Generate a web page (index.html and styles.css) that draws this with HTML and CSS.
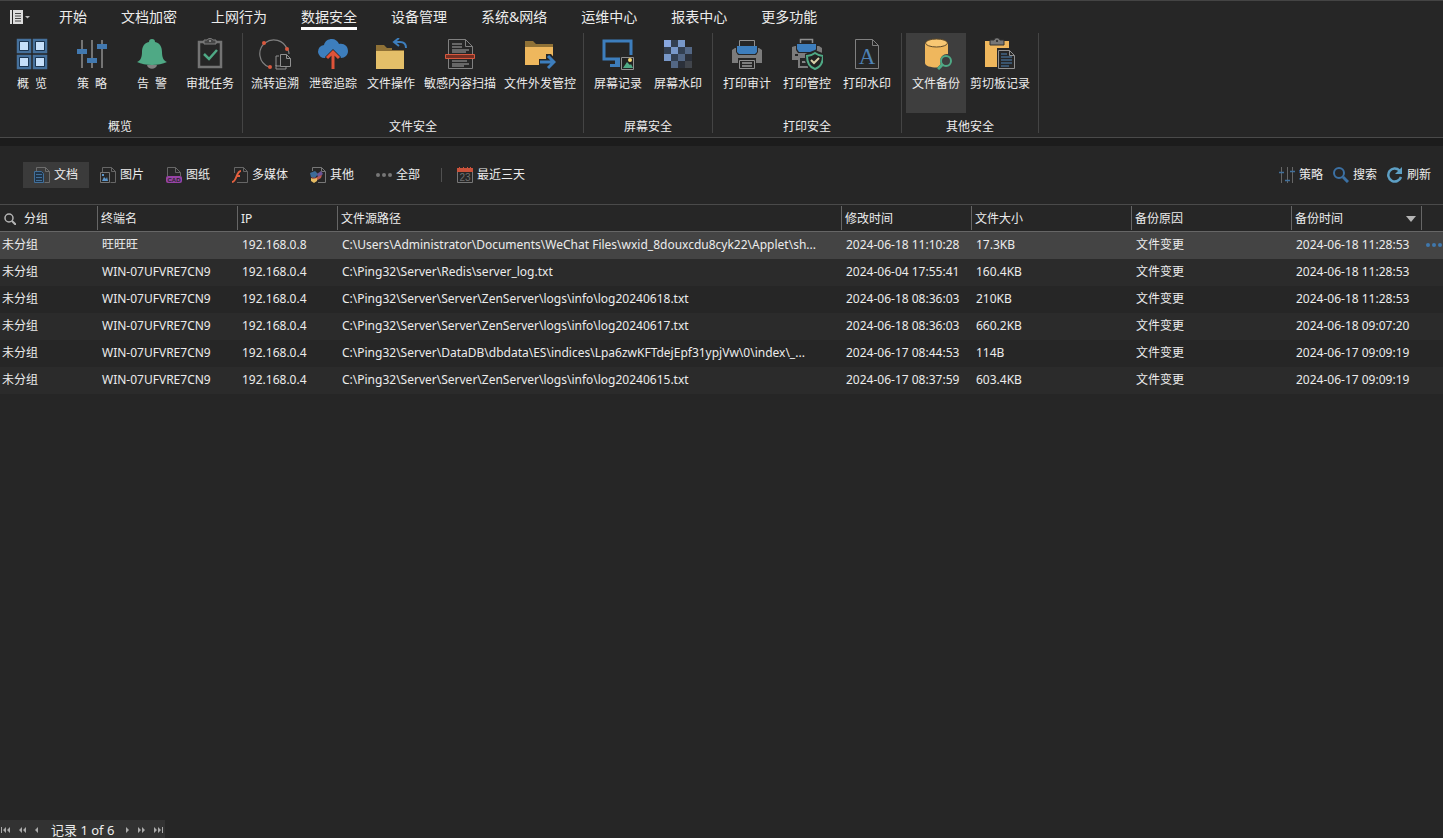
FILE: index.html
```html
<!DOCTYPE html>
<html lang="zh-CN">
<head>
    <meta charset="UTF-8">
    <meta name="viewport" content="width=device-width, initial-scale=1.0">
    <title>文件备份</title>
    <link rel="stylesheet" href="styles.css">
</head>
<body>

<nav class="menu">
    <button class="app-btn" type="button" aria-label="菜单">
        <svg width="20" height="14" viewBox="0 0 20 14">
            <path d="M0 0h2v14H0z" fill="#ddd"/>
            <path d="M3 0h10v14H3z" fill="#ddd"/>
            <path d="M5 3.5h6M5 6h6M5 8.5h6M5 11h6" stroke="#444"/>
            <path d="M15 6h5l-2.5 2.5z" fill="#bbb"/>
        </svg>
    </button>
    <a href="#">开始</a>
    <a href="#">文档加密</a>
    <a href="#">上网行为</a>
    <a href="#" class="active">数据安全</a>
    <a href="#">设备管理</a>
    <a href="#">系统&amp;网络</a>
    <a href="#">运维中心</a>
    <a href="#">报表中心</a>
    <a href="#">更多功能</a>
</nav>

<div class="ribbon">
    <section class="group first">
        <div class="group-items">
            <button type="button">
                <svg viewBox="0 0 32 32">
                    <path d="M2 2h12v12H2zM18 2h12v12H18zM2 18h12v12H2zM18 18h12v12H18z" fill="#0f2338" stroke="#46719c" stroke-width="2.5"/>
                    <path d="M4 4h8v8H4zM20 4h8v8h-8zM4 20h8v8H4zM20 20h8v8h-8z" fill="#c6e0fa"/>
                </svg>
                <span>概  览</span>
            </button>
            <button type="button">
                <svg viewBox="0 0 32 32">
                    <path d="M6 2v28M16 2v28M26 2v28" stroke="#747474" stroke-width="2"/>
                    <path d="M1 11h10v5H1zM11 20h10v5H11zM21 6h10v5H21z" fill="#4279b0"/>
                </svg>
                <span>策  略</span>
            </button>
            <button type="button">
                <svg viewBox="0 0 32 32">
                    <path d="M11 27h10c-1 5-9 5-10 0z" fill="#808080"/>
                    <path d="M16 1c2 0 3 1 3 3 5 1 7 5 7 10 0 6 2 9 5 10-8 4-22 4-30 0 3-1 5-4 5-10 0-5 2-9 7-10 0-2 1-3 3-3z" fill="#4fa985"/>
                </svg>
                <span>告  警</span>
            </button>
            <button type="button">
                <svg viewBox="0 0 32 32">
                    <path d="M5 4h22v25H5z" fill="none" stroke="#747474" stroke-width="2.5"/>
                    <path d="M10 2h3c1-2 5-2 6 0h3v4H10z" fill="#444" stroke="#808080"/>
                    <circle cx="16" cy="3" r="1" fill="#999"/>
                    <path d="M10 16l5 5 8-9" fill="none" stroke="#4fa985" stroke-width="2.5"/>
                </svg>
                <span>审批任务</span>
            </button>
        </div>
        <h2>概览</h2>
    </section>

    <section class="group files">
        <div class="group-items">
            <button type="button">
                <svg viewBox="0 0 32 32">
                    <path d="M6 5A14 14 0 0 0 10 29M6 5A14 14 0 0 1 28 11M29 12q1 2 1 4" fill="none" stroke="#808080" stroke-width="1.2"/>
                    <path d="M22 28h-5V18h3" fill="none" stroke="#909090"/>
                    <path d="M21.500 16.500h6l4 4v8h-10zM27.500 16.500v4h4M17 27v4h10v-2" fill="none" stroke="#909090"/>
                    <g fill="#d9583e"><circle cx="5" cy="5" r="2"/><circle cx="28" cy="11" r="2"/><circle cx="11" cy="29" r="2"/></g>
                </svg>
                <span>流转追溯</span>
            </button>
            <button type="button">
                <svg viewBox="0 0 32 32">
                    <path d="M8 20a6.5 6.5 0 0 1-1-13C8 3 11 1 15 1c3 0 6 2 7 5 5-1 9 2 9 7 0 4-3 7-7 7z" fill="#3d7ebd"/>
                    <path d="M16 11l8 8-1 2h-5v10h-4V21H9l-1-2z" fill="#262626"/>
                    <path d="M16 31V15M10 20l6-6 6 6" fill="none" stroke="#de5339" stroke-width="3"/>
                </svg>
                <span>泄密追踪</span>
            </button>
            <button type="button">
                <svg viewBox="0 0 32 32">
                    <path d="M1 7h8l3 3h17v4H1z" fill="#8f7136"/>
                    <path d="M1 13h28v18H1z" fill="#e4bf69"/>
                    <path d="M17 6h15v6H17z" fill="#262626"/>
                    <path d="M24 0l-5 4 5 4M19 4h6q6 0 6 6" fill="none" stroke="#3d7ebd" stroke-width="2"/>
                </svg>
                <span>文件操作</span>
            </button>
            <button type="button">
                <svg viewBox="0 0 32 32">
                    <path d="M4.5 1.5h17l7 7v22h-24zM21.5 1.5v7h7" fill="none" stroke="#808080"/>
                    <path d="M8 6h10M8 9h10M8 12h17M8 14h14M8 23h15M8 26h17M8 28h12" stroke="#a8a8a8"/>
                    <path d="M1.5 16.5h29v4h-29z" fill="#742f23" stroke="#d9583e"/>
                </svg>
                <span>敏感内容扫描</span>
            </button>
            <button type="button">
                <svg viewBox="0 0 32 32">
                    <path d="M1 3h8l3 3h17v5H1z" fill="#8f7136"/>
                    <path d="M1 9h28v18H1z" fill="#eeb75d"/>
                    <path d="M15 21h7v-5h5l7 8-7 8h-5v-5h-7z" fill="#262626"/>
                    <path d="M16 24h13M24 18l6 6-6 6" fill="none" stroke="#3d7ebd" stroke-width="3"/>
                </svg>
                <span>文件外发管控</span>
            </button>
        </div>
        <h2>文件安全</h2>
    </section>

    <section class="group">
        <div class="group-items">
            <button type="button">
                <svg viewBox="0 0 32 32">
                    <path d="M2 3h27v18H2z" fill="none" stroke="#3d7ebd" stroke-width="3"/>
                    <path d="M13 22h6v4h3v3H8v-3h5z" fill="#3d7ebd"/>
                    <path d="M18 17h14v15H18z" fill="#262626"/>
                    <path d="M19.5 19.5h12v12h-12z" fill="#222" stroke="#909090"/>
                    <path d="M21 30l4-6 3 3 1-1 2 4z" fill="#4fa985"/>
                    <circle cx="28" cy="22" r="2" fill="#f3d675"/>
                </svg>
                <span>屏幕记录</span>
            </button>
            <button type="button">
                <svg viewBox="0 0 32 32">
                    <path d="M2 2h7v7H2z" fill="#88a7df"/>
                    <path d="M16 2h7v7h-7zM9 9h7v7H9zM2 16h7v7H2z" fill="#7898c9"/>
                    <path d="M23 9h7v7h-7zM16 16h7v7h-7zM9 23h7v7H9z" fill="#536785"/>
                    <path d="M9 2h7v7H9zM2 9h7v7H2zM16 9h7v7h-7zM9 16h7v7H9z" fill="#334052"/>
                    <path d="M23 16h7v7h-7zM16 23h7v7h-7z" fill="#2b303a"/>
                    <path d="M23 23h7v7h-7z" fill="#41454c"/>
                </svg>
                <span>屏幕水印</span>
            </button>
        </div>
        <h2>屏幕安全</h2>
    </section>

    <section class="group">
        <div class="group-items">
            <button type="button">
                <svg viewBox="0 0 32 32">
                    <path d="M1 12l3-2h24l3 2v13H1z" fill="#7c7c7c"/>
                    <path d="M8.5 2.5h15v8h-15z" fill="#262626" stroke="#909090"/>
                    <path d="M5 8h22v6l-2 3H7l-2-3z" fill="#262626"/>
                    <path d="M6 8h20v6l-2 2H8l-2-2z" fill="#3d7ebd"/>
                    <path d="M7 20h18v10H7z" fill="#262626"/>
                    <path d="M8.500 22.500h15v8h-15z" fill="#262626" stroke="#909090"/>
                    <path d="M11 25h10M11 28h10" stroke="#d6d6d6"/>
                </svg>
                <span>打印审计</span>
            </button>
            <button type="button">
                <svg viewBox="0 0 32 32">
                    <path d="M1 9l3-1h24l3 2v12H1z" fill="#7c7c7c"/>
                    <path d="M9.5 1.5h12v7h-12z" fill="#262626" stroke="#909090" stroke-width="1.5"/>
                    <path d="M5 5h21v7l-2 3H7l-2-3z" fill="#262626"/>
                    <path d="M6 6h19v5l-2 3H8l-2-3z" fill="#3d7ebd"/>
                    <path d="M4 16h3v2H4zM7 18h13v11H7z" fill="#262626"/>
                    <path d="M17 29H8V19h9" fill="none" stroke="#7c7c7c" stroke-width="2"/>
                    <path d="M11 23h6v2h-6z" fill="#858585"/>
                    <path d="M24 12l10 4v7q-2 8-10 10-8-2-10-10v-7z" fill="#262626"/>
                    <path d="M24 15q4 3 8 3c0 7-2 11-8 13-6-2-8-6-8-13q4 0 8-3z" fill="#222" stroke="#4fa985" stroke-width="2"/>
                    <path d="M20 22l3 3 5-5" fill="none" stroke="#d8cfa8" stroke-width="2"/>
                </svg>
                <span>打印管控</span>
            </button>
            <button type="button">
                <svg viewBox="0 0 32 32">
                    <path d="M4.5 1.5h17l6 6v23h-23zM21.5 1.5v6h6" fill="none" stroke="#808080"/>
                    <text x="16" y="26" class="doc-letter">A</text>
                </svg>
                <span>打印水印</span>
            </button>
        </div>
        <h2>打印安全</h2>
    </section>

    <section class="group">
        <div class="group-items">
            <button type="button" class="active">
                <svg viewBox="0 0 32 32">
                    <path d="M5 5v20c0 6 23 6 23 0V5z" fill="#efb75d"/>
                    <ellipse cx="16.5" cy="5" rx="11" ry="4" fill="#f8c773" stroke="#5e4a2a"/>
                    <path d="M18 33l6-6" stroke="#3e3e3e" stroke-width="6"/>
                    <circle cx="27" cy="23" r="7" fill="#3e3e3e"/>
                    <circle cx="26" cy="23" r="5" fill="none" stroke="#4fa985" stroke-width="2"/>
                    <path d="M23 26l-5 5" stroke="#4fa985" stroke-width="3"/>
                </svg>
                <span>文件备份</span>
            </button>
            <button type="button">
                <svg viewBox="0 0 32 32">
                    <path d="M1 3h24v26H1z" fill="#efb75d"/>
                    <path d="M6 2h4c1-3 5-3 6 0h4v5H6z" fill="#777" stroke="#303030"/>
                    <circle cx="13" cy="3" r="1" fill="#262626"/>
                    <path d="M13 10h14l5 5v17H13z" fill="#262626"/>
                    <path d="M14.5 12.5h11l5 5v13h-16zM25.5 12.5v5h5" fill="none" stroke="#909090"/>
                    <path d="M17 16h6M17 19h11M17 22h11M17 25h11M17 28h8" stroke="#4f83b5"/>
                </svg>
                <span>剪切板记录</span>
            </button>
        </div>
        <h2>其他安全</h2>
    </section>
</div>

<main>
    <div class="toolbar">
        <div class="filters">
            <button type="button" class="active">
                <svg viewBox="0 0 16 16">
                    <path d="M2.5 4V.5h9l4 4v11h-5M11.5.5v4h4" fill="none" stroke="#6c6c6c"/>
                    <path d="M.5 4.5h7l2 2v9h-9z" fill="#203448" stroke="#42709b"/>
                    <path d="M2 7.5h6M2 10.5h6M2 13.5h6" stroke="#42709b"/>
                </svg>
                文档
            </button>
            <button type="button">
                <svg viewBox="0 0 16 16">
                    <path d="M2.5 5V.5h9l4 4v11h-5M11.5.5v4h4" fill="none" stroke="#666"/>
                    <path d="M.5 5.5h9v10h-9z" fill="#262626" stroke="#777"/>
                    <path d="M2 14l2-4 2 2 1-2 1 4z" fill="#5b96cc"/>
                    <path d="M2 7h2v2H2z" fill="#5b96cc"/>
                </svg>
                图片
            </button>
            <button type="button">
                <svg viewBox="0 0 16 16">
                    <path d="M1.5 9V.5h8l5 5V9M9.5.5v5h5" fill="none" stroke="#666"/>
                    <rect x="0" y="9" width="16" height="7" rx="2" fill="#9743a5"/>
                    <text x="8" y="15" class="cad-letters">CAD</text>
                </svg>
                图纸
            </button>
            <button type="button">
                <svg viewBox="0 0 16 16">
                    <path d="M2.5 6V.5h9l4 4v11H5M11.5.5v4h4" fill="none" stroke="#666"/>
                    <path d="M9 4c-5 0-4 11-9 11M4 9h4" fill="none" stroke="#e3603f" stroke-width="2"/>
                </svg>
                多媒体
            </button>
            <button type="button">
                <svg viewBox="0 0 16 16">
                    <path d="M2.5 4V.5h9l4 4v11H8M11.5.5v4h4" fill="none" stroke="#777"/>
                    <path d="M0 6l5-2 3 3-3 4-4-1z" fill="#3d6b99"/>
                    <path d="M7 7l4-3 2 3-5 4z" fill="#6c5596"/>
                    <path d="M1 10l4 1 7-3-1 3-5 3z" fill="#b9584d"/>
                    <path d="M1 11l3 1 3-1v3l-3 2-3-2z" fill="#e6bb62"/>
                </svg>
                其他
            </button>
            <button type="button">
                <svg viewBox="0 0 16 16">
                    <g fill="#777"><circle cx="2" cy="8" r="2"/><circle cx="8" cy="8" r="2"/><circle cx="14" cy="8" r="2"/></g>
                </svg>
                全部
            </button>
            <span class="divider"></span>
            <button type="button">
                <svg viewBox="0 0 16 16">
                    <path d="M.5 5v10.5h15V5" fill="none" stroke="#777"/>
                    <path d="M0 1h2V0h1v1h3V0h1v1h3V0h1v1h2V0h1v1h2v4H0z" fill="#c9523b"/>
                    <text x="8" y="14" class="date-digits">23</text>
                </svg>
                最近三天
            </button>
        </div>
        <div class="actions">
            <button type="button">
                <svg viewBox="0 0 16 16">
                    <path d="M2.5 0v16M8.5 0v16M13.5 0v16" stroke="#666"/>
                    <path d="M0 5.5h5M6 13.5h5M11 4.5h5" stroke="#42709b" stroke-width="1.5"/>
                </svg>
                策略
            </button>
            <button type="button">
                <svg viewBox="0 0 16 16">
                    <circle cx="6" cy="6" r="5" fill="none" stroke="#3b70a3" stroke-width="2"/>
                    <path d="M10 10l5 5" stroke="#3b70a3" stroke-width="3"/>
                </svg>
                搜索
            </button>
            <button type="button">
                <svg viewBox="0 0 16 16">
                    <path d="M12.5 3.5A6.5 6.5 0 1 0 14 10" fill="none" stroke="#5d9fc4" stroke-width="2.5"/>
                    <path d="M15 0v7H8z" fill="#5d9fc4"/>
                </svg>
                刷新
            </button>
        </div>
    </div>

    <table>
        <colgroup>
            <col class="c-group">
            <col class="c-name">
            <col class="c-ip">
            <col>
            <col class="c-time">
            <col class="c-mid">
            <col class="c-mid">
            <col class="c-time">
            <col class="c-more">
        </colgroup>
        <thead>
            <tr>
                <th><div class="search-head">
                    <svg width="12" height="12" viewBox="0 0 12 12">
                        <circle cx="5" cy="5" r="4" fill="none" stroke="#b5b5b5" stroke-width="1.5"/>
                        <path d="M8 8l4 4" stroke="#b5b5b5" stroke-width="2"/>
                    </svg>
                    分组
                </div></th>
                <th><div>终端名</div></th>
                <th><div>IP</div></th>
                <th><div>文件源路径</div></th>
                <th><div>修改时间</div></th>
                <th><div>文件大小</div></th>
                <th><div>备份原因</div></th>
                <th><div class="sorted">备份时间
                    <svg width="10" height="6" viewBox="0 0 10 6"><path d="M0 0h10L5 6z" fill="#b5b5b5"/></svg>
                </div></th>
                <th></th>
            </tr>
        </thead>
        <tbody>
            <tr class="selected">
                <td>未分组</td>
                <td>旺旺旺</td>
                <td>192.168.0.8</td>
                <td>C:\Users\Administrator\Documents\WeChat Files\wxid_8douxcdu8cyk22\Applet\sh...</td>
                <td>2024-06-18 11:10:28</td>
                <td>17.3KB</td>
                <td>文件变更</td>
                <td>2024-06-18 11:28:53</td>
                <td><button type="button" class="more" aria-label="更多">
                    <svg width="16" height="4" viewBox="0 0 16 4"><g fill="#3f78ad"><circle cx="2" cy="2" r="2"/><circle cx="8" cy="2" r="2"/><circle cx="14" cy="2" r="2"/></g></svg>
                </button></td>
            </tr>
            <tr>
                <td>未分组</td>
                <td>WIN-07UFVRE7CN9</td>
                <td>192.168.0.4</td>
                <td>C:\Ping32\Server\Redis\server_log.txt</td>
                <td>2024-06-04 17:55:41</td>
                <td>160.4KB</td>
                <td>文件变更</td>
                <td>2024-06-18 11:28:53</td>
                <td></td>
            </tr>
            <tr>
                <td>未分组</td>
                <td>WIN-07UFVRE7CN9</td>
                <td>192.168.0.4</td>
                <td>C:\Ping32\Server\Server\ZenServer\logs\info\log20240618.txt</td>
                <td>2024-06-18 08:36:03</td>
                <td>210KB</td>
                <td>文件变更</td>
                <td>2024-06-18 11:28:53</td>
                <td></td>
            </tr>
            <tr>
                <td>未分组</td>
                <td>WIN-07UFVRE7CN9</td>
                <td>192.168.0.4</td>
                <td>C:\Ping32\Server\Server\ZenServer\logs\info\log20240617.txt</td>
                <td>2024-06-18 08:36:03</td>
                <td>660.2KB</td>
                <td>文件变更</td>
                <td>2024-06-18 09:07:20</td>
                <td></td>
            </tr>
            <tr>
                <td>未分组</td>
                <td>WIN-07UFVRE7CN9</td>
                <td>192.168.0.4</td>
                <td>C:\Ping32\Server\DataDB\dbdata\ES\indices\Lpa6zwKFTdejEpf31ypjVw\0\index\_...</td>
                <td>2024-06-17 08:44:53</td>
                <td>114B</td>
                <td>文件变更</td>
                <td>2024-06-17 09:09:19</td>
                <td></td>
            </tr>
            <tr>
                <td>未分组</td>
                <td>WIN-07UFVRE7CN9</td>
                <td>192.168.0.4</td>
                <td>C:\Ping32\Server\Server\ZenServer\logs\info\log20240615.txt</td>
                <td>2024-06-17 08:37:59</td>
                <td>603.4KB</td>
                <td>文件变更</td>
                <td>2024-06-17 09:09:19</td>
                <td></td>
            </tr>
        </tbody>
    </table>
</main>

<footer class="pager">
    <button type="button" aria-label="第一条"><svg width="10" height="6" viewBox="0 0 10 6"><path d="M0 0h1v6H0zM5 0v6L2 3zM9 0v6L6 3z"/></svg></button>
    <button type="button" aria-label="上一页"><svg width="8" height="6" viewBox="0 0 8 6"><path d="M3 0v6L0 3zM7 0v6L4 3z"/></svg></button>
    <button type="button" aria-label="上一条"><svg width="4" height="6" viewBox="0 0 4 6"><path d="M3 0v6L0 3z"/></svg></button>
    <span>记录 1 of 6</span>
    <button type="button" aria-label="下一条"><svg width="4" height="6" viewBox="0 0 4 6"><path d="M0 0v6l3-3z"/></svg></button>
    <button type="button" aria-label="下一页"><svg width="8" height="6" viewBox="0 0 8 6"><path d="M0 0v6l3-3zM4 0v6l3-3z"/></svg></button>
    <button type="button" aria-label="最后一条"><svg width="10" height="6" viewBox="0 0 10 6"><path d="M0 0v6l3-3zM4 0v6l3-3zM8 0h1v6H8z"/></svg></button>
</footer>

</body>
</html>
```
FILE: styles.css
```css
* {
    box-sizing: border-box;
}
body {
    margin: 0;
    min-height: 100vh;
    display: flex;
    flex-direction: column;
    background: #262626;
    color: #ececec;
    font-family: "Noto Sans", "Noto Sans CJK SC", sans-serif;
    font-size: 12px;
    line-height: 16px;
}
button {
    border: 0;
    padding: 0;
    background: none;
    color: inherit;
    font: inherit;
    white-space: nowrap;
}
svg {
    display: block;
    flex: none;
}

/* top menu */
.menu {
    display: flex;
    height: 33px;
    padding-left: 10px;
    border-top: 1px solid #444;
}
.app-btn {
    width: 32px;
}
.menu a {
    margin: 6px 17px 0;
    height: 23px;
    color: inherit;
    font-size: 14px;
    line-height: 20px;
    text-decoration: none;
    white-space: nowrap;
}
.menu .active {
    border-bottom: 3px solid #fff;
}

/* ribbon */
.ribbon {
    display: flex;
    height: 105px;
    padding-bottom: 4px;
    border-bottom: 1px solid #4a4a4a;
}
.group {
    padding: 0 4px;
    border-right: 1px solid #444;
    text-align: center;
}
.group.first {
    padding-left: 2px;
}
.group.files {
    padding: 0 3px;
}
.group-items {
    display: flex;
    height: 80px;
}
.group-items button {
    display: flex;
    flex-direction: column;
    align-items: center;
    min-width: 60px;
    padding: 5px 4px 0;
}
.files .group-items button {
    min-width: 58px;
}
.first .group-items button:last-child {
    min-width: 56px;
}
.group-items .active {
    background: #3e3e3e;
}
.group-items svg {
    width: 32px;
    height: 32px;
}
.group-items span {
    margin-top: 6px;
    white-space: pre;
}
.group h2 {
    margin: 6px 0 0;
    font-size: 12px;
    font-weight: normal;
}
.doc-letter {
    fill: #4f83b5;
    font-family: "Liberation Serif", serif;
    font-size: 23px;
    text-anchor: middle;
}

/* filter bar */
main {
    flex: 1;
    border-top: 8px solid #1c1c1c;
}
.toolbar {
    display: flex;
    justify-content: space-between;
    height: 58px;
    padding: 16px 7px 16px 23px;
}
.filters,
.actions {
    display: flex;
    align-items: center;
}
.toolbar button {
    display: flex;
    align-items: center;
    gap: 4px;
    height: 26px;
    padding: 0 11px;
}
.toolbar .actions button {
    padding: 0 5px;
}
.toolbar .active {
    background: #3b3b3b;
}
.toolbar svg {
    width: 16px;
    height: 16px;
}
.divider {
    width: 1px;
    height: 14px;
    margin: 0 4px 0 10px;
    background: #505050;
}
.cad-letters {
    fill: #262626;
    font-family: "Liberation Sans", sans-serif;
    font-size: 6px;
    font-weight: bold;
    text-anchor: middle;
}
.date-digits {
    fill: #707070;
    font-family: "Liberation Sans", sans-serif;
    font-size: 10px;
    text-anchor: middle;
}

/* records */
table {
    width: 100%;
    border-collapse: separate;
    border-spacing: 0;
    table-layout: fixed;
}
.c-group { width: 98px; }
.c-name { width: 140px; }
.c-ip { width: 100px; }
.c-time { width: 130px; }
.c-mid { width: 160px; }
.c-more { width: 21px; }
th {
    height: 28px;
    padding: 0;
    border-top: 1px solid #4a4a4a;
    border-bottom: 1px solid #666;
    font-weight: normal;
    text-align: left;
}
th div {
    height: 24px;
    padding: 2px 0 0 3px;
    border-right: 1px solid #666;
    line-height: 22px;
}
th .search-head {
    display: flex;
    align-items: center;
    gap: 8px;
    padding-left: 4px;
}
th .sorted {
    display: flex;
    align-items: center;
    justify-content: space-between;
    padding-right: 5px;
}
td {
    height: 27px;
    padding: 0 0 2px 4px;
    overflow: hidden;
    white-space: nowrap;
}
td:first-child {
    padding-left: 2px;
}
tbody tr:nth-child(even) {
    background: #2b2b2b;
}
tbody .selected {
    background: #444;
}
.more {
    display: block;
}

/* record navigator */
.pager {
    display: flex;
    align-items: center;
    align-self: flex-start;
    gap: 8px;
    height: 18px;
    padding: 2px 1px 0;
    background: #323232;
}
.pager span {
    margin: 0 4px;
    font-size: 13px;
}
.pager svg {
    fill: #aaa;
}
```
